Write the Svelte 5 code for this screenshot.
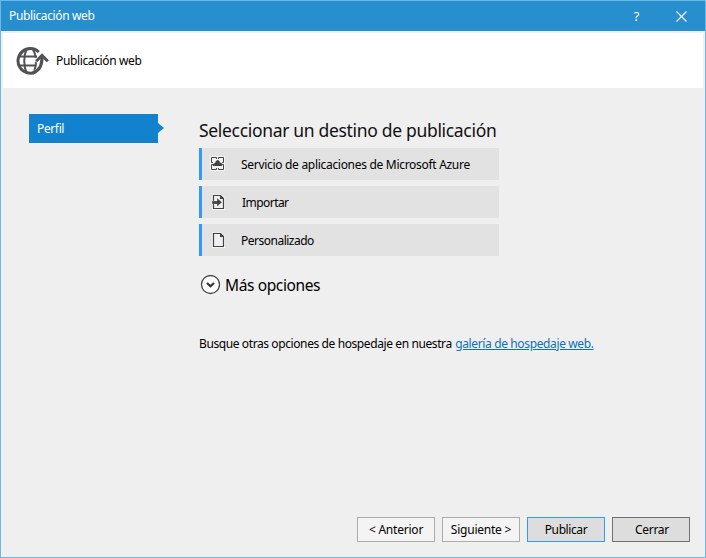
<script>
  const targets = [
    { icon: 'azure', label: 'Servicio de aplicaciones de Microsoft Azure' },
    { icon: 'import', label: 'Importar' },
    { icon: 'custom', label: 'Personalizado' }
  ];
  const actions = [
    { label: '< Anterior', kind: 'plain' },
    { label: 'Siguiente >', kind: 'plain' },
    { label: 'Publicar', kind: 'primary' },
    { label: 'Cerrar', kind: 'dark' }
  ];
</script>

<div class="window">
  <header class="titlebar">
    <span class="title">Publicación web</span>
    <span class="help">?</span>
    <svg class="close" width="11" height="11" viewBox="0 0 11 11"><path d="M.5.5l10 10M10.500.500l-10 10" fill="none" stroke="#fff" stroke-width="1.2" /></svg>
  </header>

  <section class="banner">
    <svg width="34" height="30" viewBox="0 0 34 30" fill="none" stroke="#505152">
      <path d="M22.800 6A12.300 12.300 0 1 0 20 25.800" stroke-width="3" />
      <path d="M10.500 3.500c-3 6-3 17 0 23M17 3.500c1.500 2.500 2.500 5 2.700 8.500M17 26.500c2-2.700 3-7 3-11M3 10.500h18M3 19.500h17" stroke-width="2" />
      <path d="M17.500 27C24 24 26 20 26 11M19.900 15.800l6.100-6.300 6.100 6.300" stroke="#fff" stroke-width="4.500" />
      <path d="M17 27C23.500 24 26 20 26 10.500" stroke-width="3.200" />
      <path d="M20.200 15.300l5.800-6 5.800 6" stroke-width="3" />
    </svg>
    <span>Publicación web</span>
  </section>

  <div class="body">
    <nav><div class="tab">Perfil</div></nav>
    <main>
      <h1>Seleccionar un destino de publicación</h1>
      <div class="targets">
        {#each targets as t}
          <div class="target {t.icon}">
            <svg width="16" height="16" viewBox="0 0 16 16">
              {#if t.icon === 'azure'}
                <path d="M0 0h15v15H0z" fill="#f3f3f3" />
                <path d="M3 6.500H1.500v-5h5V3M8.500 3V1.500h5v5H12M6.500 12v1.500h-5v-5H3M12 8.500h1.500v5h-5V12" fill="none" stroke="#424242" />
                <path d="M3 10V8l2-1 1-2 1.500-1L9 4.500 10 6.500l2 1V10z" fill="#424242" />
              {:else}
                <path d="M2 .5h9L15 4v12H2z" fill="#f6f6f6" />
                <path d="M3.500 1.500h7l3 3v10h-10z" fill="#f0eff1" stroke="#424242" stroke-width="1.200" />
                <path d="M10 1v4h4z" fill="#424242" />
                {#if t.icon === 'import'}
                  <path d="M2 7h5V4L12 8.200 7 12.500V10H2z" fill="#424242" stroke="#f6f6f6" stroke-width=".3" />
                {/if}
              {/if}
            </svg>
            <span>{t.label}</span>
          </div>
        {/each}
      </div>
      <div class="more">
        <svg width="20" height="20" viewBox="0 0 20 20" fill="none">
          <circle cx="10.500" cy="9.500" r="9" fill="#fff" stroke="#444" stroke-width="1.300" />
          <path d="M7 8l3.500 3.200L14 8" stroke="#333" stroke-width="2.200" />
        </svg>
        <span>Más opciones</span>
      </div>
      <p><span class="lead">Busque otras opciones de hospedaje en nuestra</span><a href="#gallery">galería de hospedaje web.</a></p>
    </main>
  </div>

  <footer>
    {#each actions as a}
      <button class={a.kind}>{a.label}</button>
    {/each}
  </footer>
</div>

<style>
  .window {
    box-sizing: border-box;
    width: 706px;
    height: 558px;
    border: 1px solid #6cb8e6;
    background: #efefef;
    color: #000;
    display: flex;
    flex-direction: column;
    font: 12px/16px "Noto Sans", "Open Sans", sans-serif;
    letter-spacing: -0.37px;
    white-space: nowrap;
  }
  .titlebar {
    height: 30px;
    flex: none;
    background: #288fce;
    color: #fff;
    display: flex;
    align-items: center;
    padding: 0 18px 0 8px;
  }
  .title { flex: 1; }
  .help { margin-right: 37px; font-size: 13px; }
  .banner {
    height: 55px;
    flex: none;
    margin: 2px 2px 0;
    background: #fff;
    display: flex;
    align-items: center;
    padding-left: 13px;
    gap: 6px;
  }
  .body { flex: 1; display: flex; }
  nav { width: 198px; padding: 26px 0 0 28px; box-sizing: border-box; }
  .tab {
    position: relative;
    width: 129px;
    height: 29px;
    line-height: 29px;
    box-sizing: border-box;
    padding-left: 8px;
    background: #1382ce;
    color: #fff;
  }
  .tab::after {
    content: "";
    position: absolute;
    left: 129px;
    top: 9px;
    border: solid transparent;
    border-width: 5.5px 0 5.5px 6px;
    border-left-color: #1382ce;
  }
  main { padding-top: 30px; }
  h1 {
    margin: 0;
    font-size: 17.5px;
    font-weight: 400;
    line-height: 24px;
    height: 30px;
    letter-spacing: -0.32px;
    color: #111;
  }
  .targets { display: flex; flex-direction: column; gap: 6px; }
  .target {
    width: 300px;
    height: 32px;
    box-sizing: border-box;
    border-left: 3px solid #3399ff;
    background: #e2e2e2;
    display: flex;
    align-items: center;
    gap: 15px;
    padding-left: 8px;
  }
  .target span { padding-top: 2px; }
  .azure { letter-spacing: -0.3px; }
  .import { gap: 16px; letter-spacing: -0.55px; }
  .custom { letter-spacing: -0.5px; }
  .more { display: flex; align-items: center; height: 22px; margin: 18px 0 0 1px; gap: 5px; font-size: 15.500px; letter-spacing: -0.38px; }
  p { margin: 40px 0 0; display: flex; gap: 3.5px; }
  .lead { letter-spacing: -0.4px; }
  a { color: #0e70c0; text-decoration: underline; }
  footer { display: flex; justify-content: flex-end; gap: 7px; padding: 0 15px 15px 0; }
  button {
    width: 78px;
    height: 25px;
    box-sizing: border-box;
    padding: 0;
    border: 1px solid #acacac;
    background: #f4f4f4;
    color: #000;
    font: inherit;
    letter-spacing: -0.22px;
  }
  .primary { background: #ddd; border-color: #3399ff; letter-spacing: -0.4px; }
  .dark { background: #ddd; border-color: #707070; letter-spacing: -0.3px; padding-left: 2px; }
</style>
